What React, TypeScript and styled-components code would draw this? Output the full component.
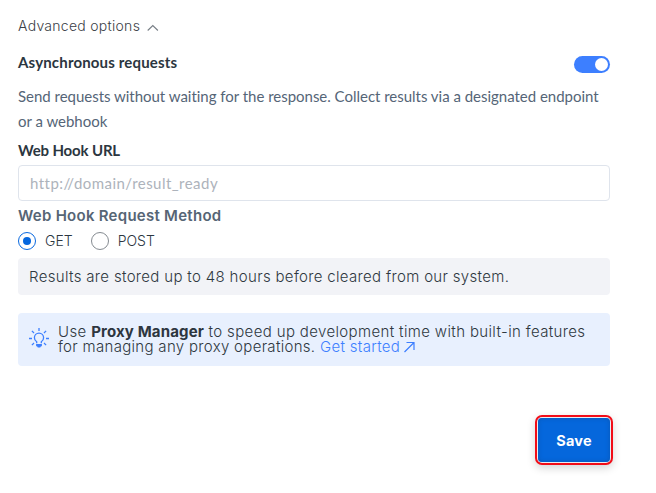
import React from "react";
import styled, { createGlobalStyle } from "styled-components";

const Global = createGlobalStyle`
  * { box-sizing: border-box; }
  body { margin: 0; background: #fff; font-family: Inter, sans-serif; color: #36404a; }
`;

const Panel = styled.main`
  display: flex;
  flex-direction: column;
  width: 610px;
  height: 493px;
  padding: 16px 0 0 18px;
`;

const Disclosure = styled.button`
  display: flex;
  align-items: center;
  gap: 7px;
  height: 20px;
  padding: 0;
  border: 0;
  background: none;
  font: 350 14px/20px Inter, sans-serif;
  letter-spacing: 0.28px;
  color: #3a4046;
  svg { margin-top: 3px; }
`;

const SettingRow = styled.div`
  display: flex;
  align-items: center;
  justify-content: space-between;
  height: 20px;
  margin-top: 18px;
`;

const Label = styled.label`
  font: 700 15px/20px Lato, sans-serif;
  letter-spacing: -0.15px;
  color: #2b3640;
`;

const SettingLabel = styled(Label)`
  margin-top: -5px;
  letter-spacing: 0.16px;
`;

const Toggle = styled.button`
  display: flex;
  justify-content: flex-end;
  align-items: center;
  width: 36px;
  height: 17px;
  margin-top: 1px;
  padding: 0 2px;
  border: 0;
  border-radius: 9px;
  background: #3d7fff;
`;

const Knob = styled.span`
  width: 13px;
  height: 13px;
  border-radius: 50%;
  background: #fff;
`;

const Description = styled.p`
  margin: 10px 0 6px;
  font: 400 15px/25px Lato, sans-serif;
  font-variant-ligatures: none;
  letter-spacing: -0.02px;
  white-space: nowrap;
  color: #556577;
`;

const UrlInput = styled.input`
  width: 100%;
  height: 36px;
  margin-top: 5px;
  padding: 0 11px;
  border: 1px solid #dfe4ec;
  border-radius: 4px;
  font: 400 15px Lato, sans-serif;
  letter-spacing: 0.46px;
  &::placeholder { color: #adb3bb; opacity: 1; }
`;

const MethodTitle = styled.div`
  height: 20px;
  margin-top: 5px;
  font: 600 15px/20px Inter, sans-serif;
  letter-spacing: 0.27px;
  color: #566575;
`;

const RadioGroup = styled.div`
  display: flex;
  gap: 18px;
  height: 20px;
  margin-top: 5px;
`;

const RadioLabel = styled.label`
  display: flex;
  align-items: center;
  gap: 9px;
  font: 350 14px/20px Inter, sans-serif;
  letter-spacing: 0;
  color: #2c363f;
`;

const Radio = styled.span<{ $checked?: boolean }>`
  display: grid;
  place-items: center;
  width: 18px;
  height: 18px;
  border: 1px solid ${(p) => (p.$checked ? "#0a69df" : "#858b91")};
  border-radius: 50%;
  &::after {
    content: "";
    width: 8px;
    height: 8px;
    border-radius: 50%;
    background: ${(p) => (p.$checked ? "#0567df" : "transparent")};
  }
`;

const Note = styled.div`
  height: 37px;
  margin-top: 7px;
  padding: 0 11px;
  border-radius: 4px;
  background: #f2f3f7;
  font: 300 15px/37px Inter, sans-serif;
  letter-spacing: 0.33px;
  white-space: nowrap;
  color: #2f383f;
`;

const Tip = styled.div`
  display: flex;
  gap: 9px;
  height: 53px;
  margin-top: 18px;
  padding: 11px 11px 0;
  border-radius: 4px;
  background: #e8f0fe;
  > svg { flex: none; margin-top: 4px; }
`;

const TipText = styled.div`
  font: 300 15px/15px Inter, sans-serif;
  letter-spacing: 0.35px;
  white-space: nowrap;
  color: #2f383f;
  b { font-weight: 700; letter-spacing: 0.15px; color: #2d3640; }
`;

const TipLine = styled.span<{ $tracking: number }>`
  display: block;
  letter-spacing: ${(p) => p.$tracking}px;
`;

const TipLink = styled.a`
  color: #3d7fff;
  svg { margin-left: 3px; vertical-align: -1px; }
`;

const SaveButton = styled.button`
  align-self: flex-end;
  width: 72px;
  height: 44px;
  margin-top: 52px;
  padding: 0;
  border: 0;
  border-radius: 4px;
  background: #0567dc;
  box-shadow: inset 0 0 5px #0858b8, 0 0 0 1px #e6edf5, 0 0 0 3px #f20d18, 0 3px 8px 3px #0000002b;
  font: 700 14.5px Inter, sans-serif;
  letter-spacing: 0.2px;
  color: #fff;
`;

const Chevron = () => (
  <svg width="12" height="8" viewBox="0 0 12 8" fill="none" stroke="#777e85" strokeWidth="1.1">
    <path d="M.7 6.5 5.8 1.5l5.1 5" />
  </svg>
);

const Bulb = () => (
  <svg width="20" height="20" viewBox="0 0 20 20" fill="none" stroke="#3d7fff" strokeWidth="1.3">
    <path d="M7.7 15.3v-1.5C6.3 12.8 5.4 11.7 5.4 9.7a4.6 4.6 0 0 1 9.2 0c0 2-.9 3.1-2.3 4.1v1.5" />
    <path d="M7.1 16h5.8v2.2H12l-.8 1.4H8.8L8 18.2h-.9z" fill="#3d7fff" stroke="none" />
    <path d="M10 0v3M0 10.5h3M17 10.5h3M2.9 2.9 5 5M17.1 2.9 15 5M2.9 17.1 5 15M17.1 17.1 15 15" />
  </svg>
);

const ExternalArrow = () => (
  <svg width="13" height="12" viewBox="0 0 13 12" fill="none" stroke="#3d7fff" strokeWidth="1.2">
    <path d="M1.5 11 11 1.5M3.5 1.5H11v7.5" />
  </svg>
);

export default function App() {
  return (
    <>
      <Global />
      <Panel>
        <Disclosure>Advanced options <Chevron /></Disclosure>
        <SettingRow>
          <SettingLabel>Asynchronous requests</SettingLabel>
          <Toggle role="switch" aria-checked="true" aria-label="Asynchronous requests"><Knob /></Toggle>
        </SettingRow>
        <Description>
          Send requests without waiting for the response. Collect results via a designated endpoint
          <br />
          or a webhook
        </Description>
        <Label htmlFor="hook">Web Hook URL</Label>
        <UrlInput id="hook" placeholder="http://domain/result_ready" />
        <MethodTitle>Web Hook Request Method</MethodTitle>
        <RadioGroup>
          <RadioLabel><Radio $checked />GET</RadioLabel>
          <RadioLabel><Radio />POST</RadioLabel>
        </RadioGroup>
        <Note>Results are stored up to 48 hours before cleared from our system.</Note>
        <Tip>
          <Bulb />
          <TipText>
            <TipLine $tracking={0.36}>
              Use <b>Proxy Manager</b> to speed up development time with built-in features
            </TipLine>
            <TipLine $tracking={0.31}>
              for managing any proxy operations. <TipLink>Get started<ExternalArrow /></TipLink>
            </TipLine>
          </TipText>
        </Tip>
        <SaveButton>Save</SaveButton>
      </Panel>
    </>
  );
}
